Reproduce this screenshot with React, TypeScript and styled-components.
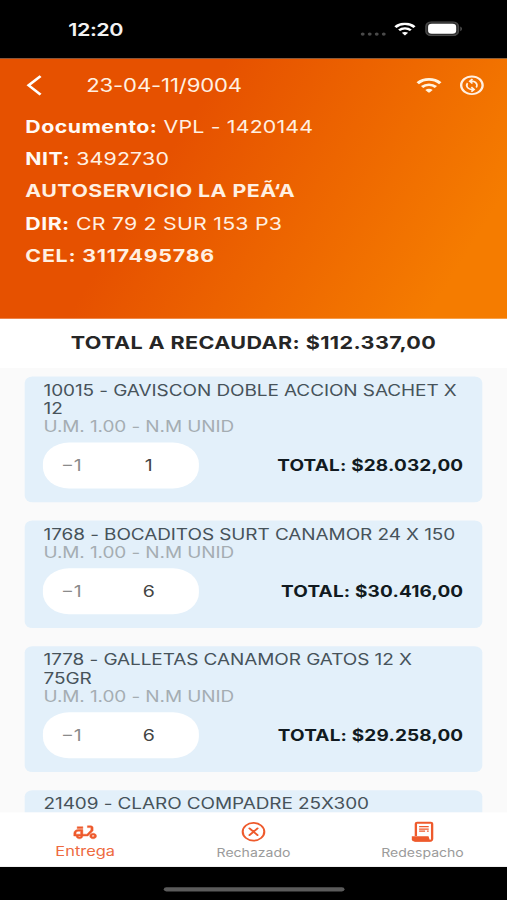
import React from "react";
import styled, { createGlobalStyle } from "styled-components";
import { MdOutlineDeliveryDining, MdOutlineChangeCircle } from "react-icons/md";

const GlobalStyle = createGlobalStyle`
  * { box-sizing: border-box; }
  html, body { margin: 0; padding: 0; background: #000; overflow: hidden; }
`;

const Viewport = styled.div`
  width: 507px;
  height: 900px;
  overflow: hidden;
  background: #000;
`;

/* The phone is laid out in 390x844 points and stretched to the window. */
const Phone = styled.div`
  width: 390px;
  height: 844px;
  transform: scale(1.3, 1.06635);
  transform-origin: 0 0;
  display: flex;
  flex-direction: column;
  font-family: Inter, "Liberation Sans", sans-serif;
  background: #fff;
  white-space: nowrap;
`;

const StatusBar = styled.div`
  height: 54.8px;
  flex: none;
  background: #000;
  display: flex;
  align-items: center;
  justify-content: space-between;
  padding: 0 34.5px 0 52.5px;
`;

const Clock = styled.span`
  color: #f2f2f2;
  font-size: 16.6px;
  font-weight: 600;
  letter-spacing: -0.35px;
  margin-top: 1px;
`;

const StatusIcons = styled.div`
  display: flex;
  align-items: center;
  gap: 6.4px;
  svg { display: block; }
`;

const Header = styled.header`
  height: 243.8px;
  flex: none;
  background: linear-gradient(117deg, #e65100 34%, #f57c00 88%);
  color: #fff0e2;
  padding: 10px 16.2px 0 19.5px;
`;

const NavRow = styled.div`
  height: 30px;
  margin-left: -0.8px;
  display: flex;
  align-items: center;
  svg { display: block; flex: none; }
`;

const NavTitle = styled.h1`
  flex: 1;
  margin: 0 0 0 33.6px;
  font-size: 17px;
  font-weight: 400;
  letter-spacing: -0.1px;
`;

const NavIcons = styled.div`
  display: flex;
  align-items: center;
  gap: 12px;
`;

const InfoLine = styled.p<{ $strong?: boolean; $track?: number }>`
  margin: 0;
  height: 30.25px;
  line-height: 30.25px;
  font-size: 16.4px;
  font-weight: ${(p) => (p.$strong ? 700 : 400)};
  letter-spacing: ${(p) => p.$track ?? 0.15}px;
  b { font-weight: 700; color: #fffaf5; letter-spacing: 0.35px; }
`;

const InfoBlock = styled.div`
  padding-top: 9.2px;
`;

const TotalBar = styled.div`
  height: 46.9px;
  flex: none;
  background: #fff;
  color: #262626;
  display: flex;
  align-items: center;
  justify-content: center;
  padding-bottom: 1.4px;
  font-size: 16.6px;
  font-weight: 650;
  letter-spacing: 0.29px;
`;

const List = styled.main`
  flex: 1;
  min-height: 0;
  overflow: hidden;
  background: #fafafa;
  padding: 7.9px 18.6px 0 19.2px;
  display: flex;
  flex-direction: column;
  gap: 17.5px;
`;

const Card = styled.article`
  flex: none;
  background: #e3f0fa;
  border-radius: 6px;
  padding: 4.7px 15px 12.8px 14.3px;
`;

const Name = styled.div`
  color: #47535a;
  font-size: 14.6px;
  line-height: 17.1px;
  white-space: pre-line;
  letter-spacing: -0.06px;
`;

const Unit = styled.div`
  color: #a5adb2;
  font-size: 14.6px;
  line-height: 17.1px;
  letter-spacing: -0.07px;
`;

const AmountRow = styled.div`
  margin-top: 5.8px;
  display: flex;
  align-items: center;
  justify-content: space-between;
`;

const Stepper = styled.div`
  width: 119.6px;
  height: 43px;
  border-radius: 20px;
  background: #fff;
  display: flex;
  align-items: center;
  padding-left: 13.4px;
  font-size: 15px;
`;

const Minus = styled.span`
  width: 38px;
  color: #8b8b8b;
`;

const Quantity = styled.span`
  width: 59px;
  text-align: center;
  color: #444;
`;

const LineTotal = styled.strong`
  color: #111a20;
  font-size: 14.6px;
  font-weight: 700;
  letter-spacing: 0.13px;
  padding-top: 0.6px;
`;

const TabBar = styled.nav`
  height: 50.5px;
  flex: none;
  background: #fff;
  display: grid;
  grid-template-columns: repeat(3, 1fr);
`;

const Tab = styled.div`
  display: flex;
  flex-direction: column;
  align-items: center;
  padding-top: 7px;
  svg { display: block; color: #ee5a2c; }
`;

const TabIcon = styled.div`
  height: 22px;
  display: flex;
  align-items: center;
  justify-content: center;
`;

const DeliveryIcon = styled(MdOutlineDeliveryDining)`
  path:not([fill="none"]) {
    stroke: currentColor;
    stroke-width: 0.4px;
  }
`;

const TabLabel = styled.span<{ $active?: boolean }>`
  color: ${(p) => (p.$active ? "#ee6a3f" : "#9b9b9b")};
  font-size: ${(p) => (p.$active ? 12.6 : 10.8)}px;
  line-height: ${(p) => (p.$active ? 16.4 : 19)}px;
  padding-left: ${(p) => (p.$active ? 1 : 0)}px;
`;

const HomeArea = styled.div`
  height: 31.5px;
  flex: none;
  background: #000;
  display: flex;
  justify-content: center;
  padding-top: 19.2px;
`;

const HomeIndicator = styled.div`
  width: 139px;
  height: 4.8px;
  border-radius: 3px;
  background: #5b5b5b;
`;

const WifiGlyph = ({ width, height, color }: { width: number; height: number; color: string }) => (
  <svg width={width} height={height} viewBox="0 0 24 18" preserveAspectRatio="none" fill="none" stroke={color}>
    <path d="M1.6 6.3C7.6.4 16.4.4 22.4 6.3" strokeWidth="3.2" />
    <path d="M5.6 10.6c3.7-3.5 9.1-3.5 12.8 0" strokeWidth="3" />
    <path d="M12 17.6l-3.4-3.5c1.9-1.7 4.9-1.7 6.8 0z" fill={color} stroke="none" />
  </svg>
);

const DotsIcon = styled.svg`
  margin-top: 8.5px;
`;

const SignalDots = () => (
  <DotsIcon width="20" height="4" viewBox="0 0 20 4" fill="#4a4a4a">
    <circle cx="2" cy="2" r="1.5" />
    <circle cx="7.4" cy="2" r="1.5" />
    <circle cx="12.8" cy="2" r="1.5" />
    <circle cx="18.2" cy="2" r="1.5" />
  </DotsIcon>
);

const Battery = () => (
  <svg width="29" height="14" viewBox="0 0 29 14">
    <rect x="0.6" y="0.6" width="25" height="12.8" rx="4.2" fill="#2c2c2c" stroke="#484848" strokeWidth="1.2" />
    <rect x="2.3" y="2.3" width="21.6" height="9.4" rx="2.8" fill="#fff" />
    <path d="M27 4.8c1.9.7 1.9 3.7 0 4.4z" fill="#484848" />
  </svg>
);

const BackChevron = () => (
  <svg width="14" height="20" viewBox="0 0 14 20" fill="none" stroke="#fff" strokeWidth="2.2">
    <path d="M12.2 1.3L3 10l9.2 8.7" />
  </svg>
);

const RejectIcon = () => (
  <svg width="20" height="20" viewBox="0 0 20 20" fill="none" stroke="currentColor" strokeWidth="1.6" strokeLinecap="round">
    <circle cx="10" cy="10" r="8.3" />
    <path d="M6.9 6.9l6.2 6.2M13.1 6.9l-6.2 6.2" />
  </svg>
);

const ReceiptIcon = () => (
  <svg width="18" height="20" viewBox="0 0 18 20" fill="none" stroke="currentColor">
    <path d="M3.9 14V2.6a1 1 0 0 1 1-1h10.5a1 1 0 0 1 1 1v13.9a2 2 0 0 1-2 2H2.8" strokeWidth="1.8" />
    <path d="M.8 14.3h12.8l1.4 4.9H2.8a2 2 0 0 1-2-2z" fill="currentColor" stroke="none" />
    <path d="M6.4 5.1h7.4M6.4 7.5h7.4M6.4 9.4h4.6M12.4 9.4h1.4" strokeWidth="1.2" />
  </svg>
);

type Product = { name: string; quantity?: number; total?: string };

const products: Product[] = [
  { name: "10015 - GAVISCON DOBLE ACCION SACHET X\n12", quantity: 1, total: "$28.032,00" },
  { name: "1768 - BOCADITOS SURT CANAMOR 24 X 150", quantity: 6, total: "$30.416,00" },
  { name: "1778 - GALLETAS CANAMOR GATOS 12 X\n75GR", quantity: 6, total: "$29.258,00" },
  { name: "21409 - CLARO COMPADRE 25X300" },
];

const ProductCard = ({ name, quantity, total }: Product) => (
  <Card>
    <Name>{name}</Name>
    {total && (
      <>
        <Unit>U.M. 1.00 - N.M UNID</Unit>
        <AmountRow>
          <Stepper>
            <Minus>−1</Minus>
            <Quantity>{quantity}</Quantity>
          </Stepper>
          <LineTotal>TOTAL: {total}</LineTotal>
        </AmountRow>
      </>
    )}
  </Card>
);

export default function App() {
  return (
    <Viewport>
      <GlobalStyle />
      <Phone>
        <StatusBar>
          <Clock>12:20</Clock>
          <StatusIcons>
            <SignalDots />
            <WifiGlyph width={17} height={12.5} color="#fff" />
            <Battery />
          </StatusIcons>
        </StatusBar>
        <Header>
          <NavRow>
            <BackChevron />
            <NavTitle>23-04-11/9004</NavTitle>
            <NavIcons>
              <WifiGlyph width={20} height={14.5} color="#fff3e0" />
              <MdOutlineChangeCircle size={22} />
            </NavIcons>
          </NavRow>
          <InfoBlock>
            <InfoLine><b>Documento:</b> VPL - 1420144</InfoLine>
            <InfoLine><b>NIT:</b> 3492730</InfoLine>
            <InfoLine $strong $track={0.36}>AUTOSERVICIO LA PEÃ‘A</InfoLine>
            <InfoLine $track={0.18}><b>DIR:</b> CR 79 2 SUR 153 P3</InfoLine>
            <InfoLine $strong $track={0.6}>CEL: 3117495786</InfoLine>
          </InfoBlock>
        </Header>
        <TotalBar>TOTAL A RECAUDAR: $112.337,00</TotalBar>
        <List>
          {products.map((product) => (
            <ProductCard key={product.name} {...product} />
          ))}
        </List>
        <TabBar>
          <Tab>
            <TabIcon><DeliveryIcon size={21} /></TabIcon>
            <TabLabel $active>Entrega</TabLabel>
          </Tab>
          <Tab>
            <TabIcon><RejectIcon /></TabIcon>
            <TabLabel>Rechazado</TabLabel>
          </Tab>
          <Tab>
            <TabIcon><ReceiptIcon /></TabIcon>
            <TabLabel>Redespacho</TabLabel>
          </Tab>
        </TabBar>
        <HomeArea>
          <HomeIndicator />
        </HomeArea>
      </Phone>
    </Viewport>
  );
}
